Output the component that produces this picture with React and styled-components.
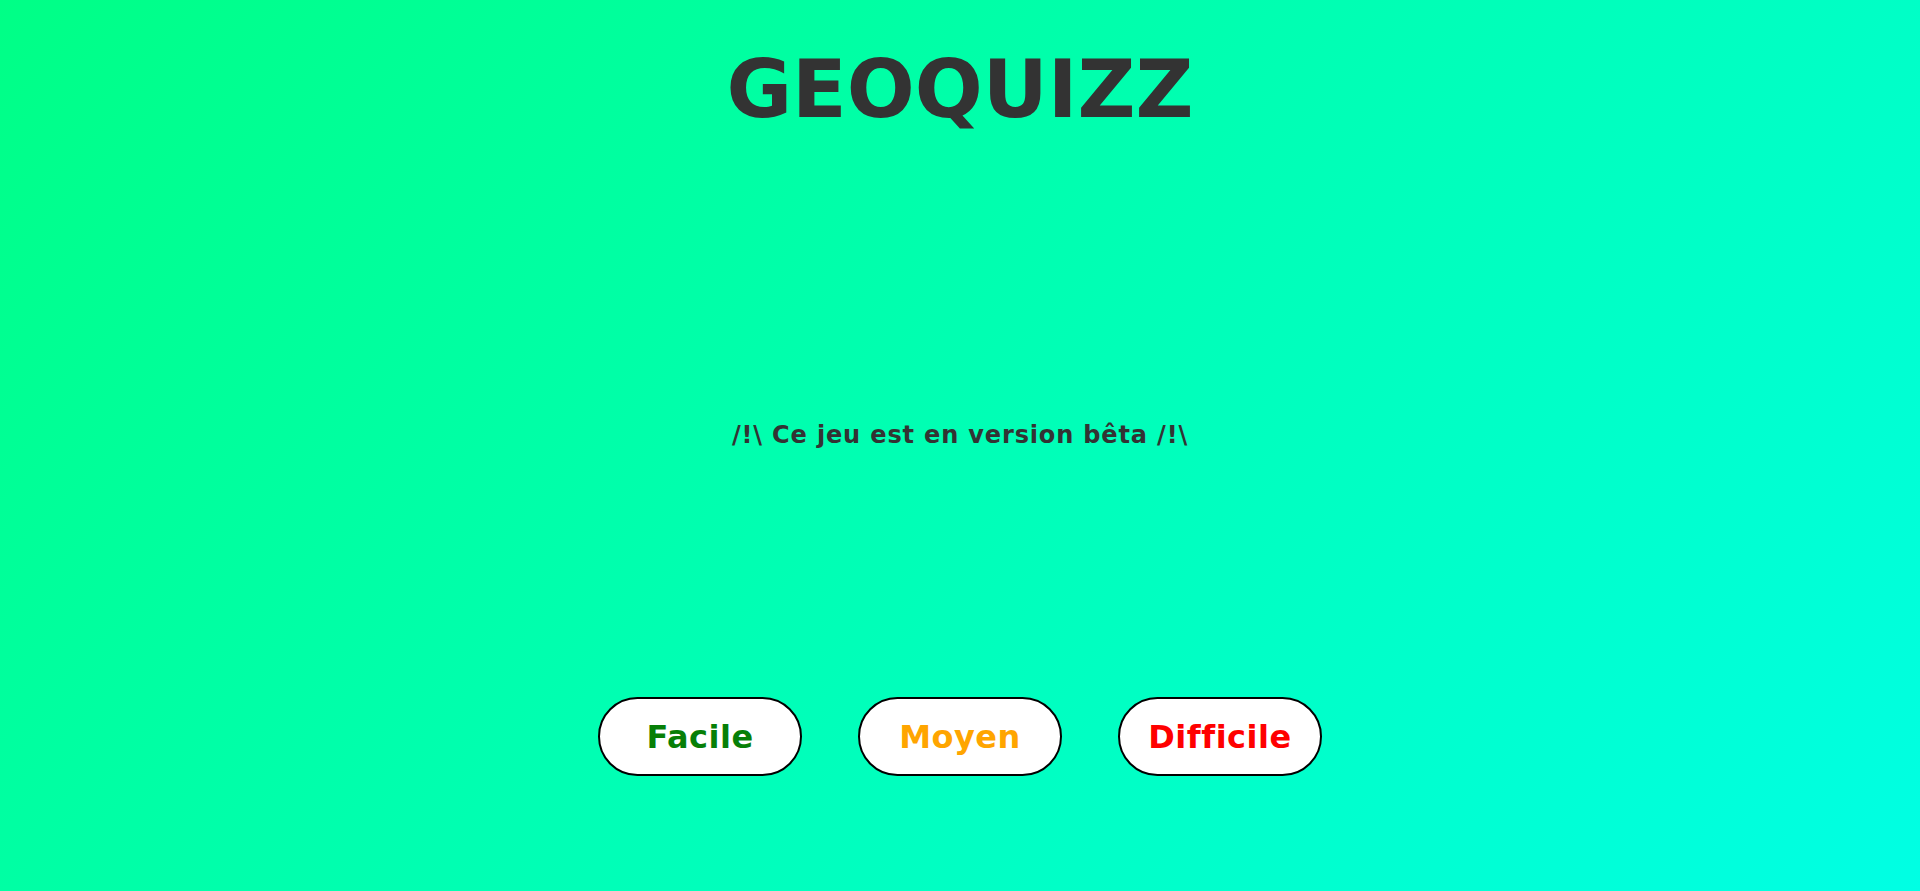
import React from "react";
import styled, { createGlobalStyle } from "styled-components";

const GlobalStyle = createGlobalStyle`
  html, body {
    margin: 0;
    padding: 0;
  }
  body {
    font-family: "DejaVu Sans", Verdana, sans-serif;
  }
`;

const Page = styled.main`
  min-height: 100vh;
  box-sizing: border-box;
  background: linear-gradient(135deg, #00ff86, #00ffe4);
  display: flex;
  flex-direction: column;
  align-items: center;
  padding-top: 43px;
`;

const Title = styled.h1`
  margin: 0;
  font-size: 80px;
  line-height: 93px;
  font-weight: bold;
  color: #333333;
`;

const Warning = styled.p`
  margin: 285px 0 0;
  font-size: 24px;
  line-height: 28px;
  font-weight: bold;
  letter-spacing: 0.85px;
  color: #333333;
`;

const Levels = styled.div`
  margin-top: 248px;
  display: flex;
  gap: 56px;
`;

const LevelButton = styled.button`
  width: 204px;
  height: 79px;
  border: 2px solid #000;
  border-radius: 40px;
  background: #fff;
  font-family: "DejaVu Sans", Verdana, sans-serif;
  font-size: 32px;
  font-weight: bold;
  letter-spacing: 0.5px;
  color: ${(p) => p.$color};
  cursor: pointer;
`;

const levels = [
  { label: "Facile", color: "#077f07" },
  { label: "Moyen", color: "#ffa500" },
  { label: "Difficile", color: "#ff0000" },
];

export default function App() {
  return (
    <>
      <GlobalStyle />
      <Page>
        <Title>GEOQUIZZ</Title>
        <Warning>/!\ Ce jeu est en version bêta /!\</Warning>
        <Levels>
          {levels.map(({ label, color }) => (
            <LevelButton key={label} $color={color}>
              {label}
            </LevelButton>
          ))}
        </Levels>
      </Page>
    </>
  );
}
